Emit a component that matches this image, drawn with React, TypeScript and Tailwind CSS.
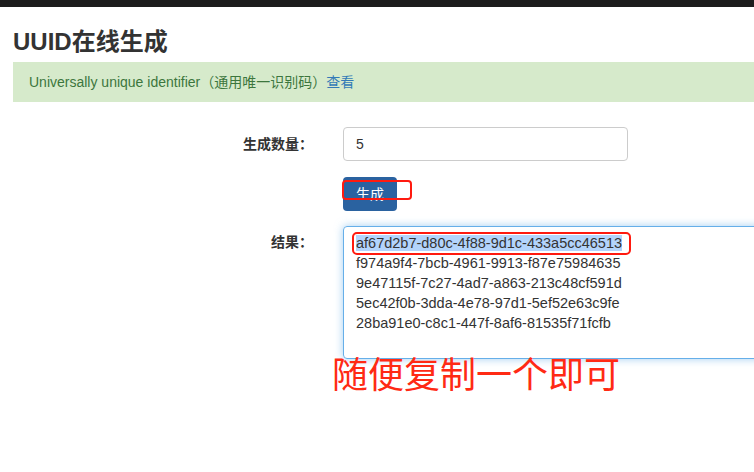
import React from "react";

const uuids = [
  "af67d2b7-d80c-4f88-9d1c-433a5cc46513",
  "f974a9f4-7bcb-4961-9913-f87e75984635",
  "9e47115f-7c27-4ad7-a863-213c48cf591d",
  "5ec42f0b-3dda-4e78-97d1-5ef52e63c9fe",
  "28ba91e0-c8c1-447f-8af6-81535f71fcfb",
];

const font = "font-['Liberation_Sans','Noto_Sans_CJK_SC',sans-serif]";

export default function App() {
  return (
    <div className={`min-h-[472px] w-[754px] overflow-hidden bg-white text-[#333] ${font}`}>
      {/* top bar */}
      <div className="h-[7px] bg-[#1c1c1c]" />

      <div className="pl-[13px]">
        <h1 className="mt-[21px] text-[24px] font-bold leading-[27px] text-[#333]">UUID在线生成</h1>

        {/* alert */}
        <div className="mt-[7px] flex h-[40px] w-[760px] items-center bg-[#d6eacb] pl-[16px] text-[14px] text-[#3c763d]">
          Universally unique identifier（通用唯一识别码）
          <span className="text-[#337ab7]">查看</span>
        </div>

        {/* form */}
        <div className="relative mt-[25px]">
          <div className="flex items-center">
            <label className="w-[300px] shrink-0 text-right text-[14px] font-bold">生成数量：</label>
            <div className="ml-[30px] flex h-[34px] w-[285px] shrink-0 items-center rounded-[4px] border border-[#ccc] pl-[12px] text-[14px]">
              5
            </div>
          </div>

          <div className="ml-[330px] mt-[16px]">
            <div className="relative flex h-[34px] w-[54px] justify-center rounded-[4px] bg-[#2a62a0] pt-[7px] text-[14px] leading-[20px] text-white">
              生成
              <div className="absolute left-[-1px] top-[3px] h-[20px] w-[70px] rounded-[4px] border-2 border-[#ff1a0f]" />
            </div>
          </div>

          <div className="mt-[15px] flex">
            <label className="w-[300px] shrink-0 pt-[6px] text-right text-[14px] font-bold leading-[20px]">结果：</label>
            <div className="relative ml-[30px] h-[133px] w-[430px] shrink-0 rounded-[4px] border border-[#66afe9] pl-[12px] pt-[6px] text-[14.5px] leading-[20px] shadow-[0_0_8px_rgba(102,175,233,0.6)]">
              {uuids.map((u, i) => (
                <div key={u}>
                  {i === 0 ? <span className="bg-[#b3d4fc]">{u}</span> : u}
                </div>
              ))}
              <div className="absolute left-[8px] top-[5px] h-[23px] w-[279px] rounded-[5px] border-2 border-[#ff1a0f]" />
            </div>
          </div>

          <div className="absolute left-[319px] top-[229px] text-[36px] leading-[40px] text-[#ff2a14]">
            随便复制一个即可
          </div>
        </div>
      </div>
    </div>
  );
}
